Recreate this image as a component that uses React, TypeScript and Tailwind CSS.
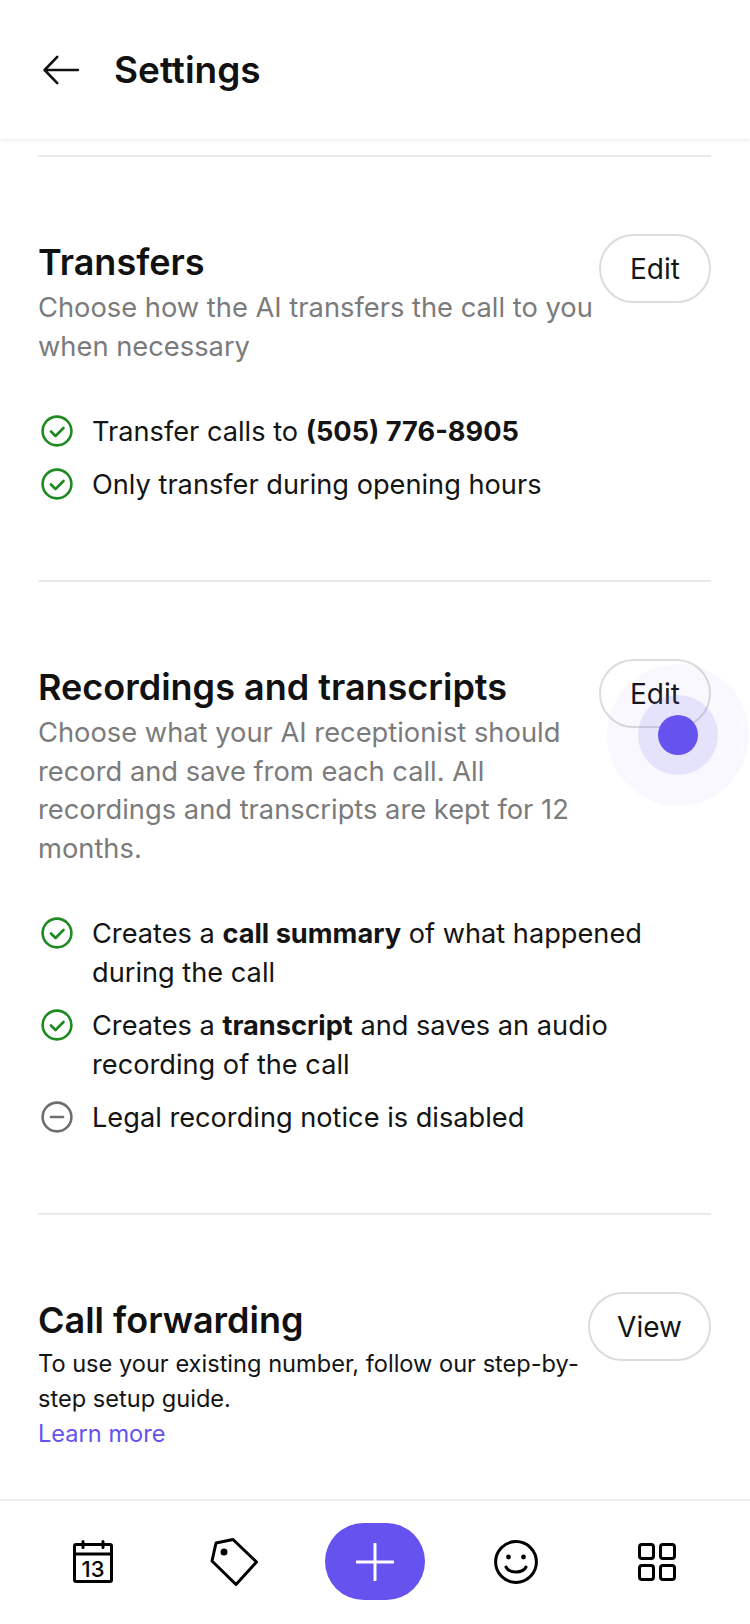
import React from "react";

function Check() {
  return (
    <svg viewBox="0 0 32 32" className="w-[32px] h-[32px] shrink-0 mt-[3px]" fill="none" stroke="#1d8a22" strokeWidth="2.6" strokeLinecap="round" strokeLinejoin="round">
      <circle cx="16" cy="16" r="14.4" />
      <path d="M10 16.5l4.5 4.5 8-8" />
    </svg>
  );
}

function Minus() {
  return (
    <svg viewBox="0 0 32 32" className="w-[32px] h-[32px] shrink-0 mt-[3px]" fill="none" stroke="#6e6e6e" strokeWidth="2.6" strokeLinecap="round">
      <circle cx="16" cy="16" r="14.4" />
      <path d="M10 16h12" />
    </svg>
  );
}

function Item({ icon, children }: { icon: React.ReactNode; children: React.ReactNode }) {
  return (
    <div className="flex gap-[19px] pl-[3px] text-[27.2px] leading-[39px] text-[#141414]">
      {icon}
      <div className="flex-1">{children}</div>
    </div>
  );
}

function Section({
  title,
  button,
  buttonWidth,
  children,
  items,
}: {
  title: string;
  button: string;
  buttonWidth: string;
  children: React.ReactNode;
  items?: React.ReactNode;
}) {
  return (
    <section className="pt-[77px] pb-[76px] border-b-2 border-[#e9e9e9] last:border-b-0">
      <div className="flex items-start">
        <div className="flex-1 min-w-0">
          <h2 className="mt-[8px] text-[36px] leading-[40px] font-semibold text-[#111]">{title}</h2>
          {children}
        </div>
        <button className={`${buttonWidth} h-[69px] shrink-0 rounded-full border-2 border-[#dcdcdc] bg-transparent text-[28px] text-[#141414]`}>
          {button}
        </button>
      </div>
      {items && <div className="mt-[46px] flex flex-col gap-[14px]">{items}</div>}
    </section>
  );
}

function Desc({ children }: { children: React.ReactNode }) {
  return <p className="mt-[7px] text-[27.3px] leading-[38.5px] text-[#7b7b7b]">{children}</p>;
}

export default function App() {
  return (
    <div className="relative w-[750px] h-[1624px] overflow-hidden bg-white flex flex-col font-['Inter',sans-serif]">
      <header className="relative z-10 h-[139px] shrink-0 flex items-center gap-[34px] pl-[42px] bg-white shadow-[0_1px_4px_rgba(0,0,0,0.10)]">
        <svg viewBox="0 0 40 32" className="w-[38px] h-[30px]" fill="none" stroke="#111" strokeWidth="2.8" strokeLinecap="round" strokeLinejoin="round">
          <path d="M38 16H3M16 2L2.5 16 16 30" />
        </svg>
        <h1 className="text-[37px] leading-[44px] font-semibold text-[#111]">Settings</h1>
      </header>

      <main className="flex-1 min-h-0 overflow-hidden pl-[38px] pr-[39px] pt-[16px]">
        <div className="border-t-2 border-[#e9e9e9]">
          <Section
            title="Transfers"
            button="Edit"
            buttonWidth="w-[112px]"
            items={
              <>
                <Item icon={<Check />}>
                  Transfer calls to <b className="font-bold">(505) 776-8905</b>
                </Item>
                <Item icon={<Check />}>Only transfer during opening hours</Item>
              </>
            }
          >
            <Desc>Choose how the AI transfers the call to you when necessary</Desc>
          </Section>
          <Section
            title="Recordings and transcripts"
            button="Edit"
            buttonWidth="w-[112px]"
            items={
              <>
                <Item icon={<Check />}>
                  Creates a <b className="font-bold">call summary</b> of what happened during the call
                </Item>
                <Item icon={<Check />}>
                  Creates a <b className="font-bold">transcript</b> and saves an audio recording of the call
                </Item>
                <Item icon={<Minus />}>Legal recording notice is disabled</Item>
              </>
            }
          >
            <Desc>Choose what your AI receptionist should record and save from each call. All recordings and transcripts are kept for 12 months.</Desc>
          </Section>
          <Section title="Call forwarding" button="View" buttonWidth="w-[123px]">
            <p className="mt-[6px] text-[23.6px] leading-[35px] text-[#141414]">
              To use your existing number, follow our step-by-step setup guide.
            </p>
            <p className="text-[23.6px] leading-[35px] text-[#6652ee]">Learn more</p>
          </Section>
        </div>
      </main>

      <nav className="relative z-10 h-[125px] shrink-0 bg-white border-t-2 border-[#eeeeee]">
        <div className="grid grid-cols-5 items-center justify-items-center px-[22px] pt-[22px]">
          <svg viewBox="0 0 40 44" className="w-[40px] h-[44px] text-black" fill="none" stroke="currentColor" strokeWidth="3" strokeLinejoin="round" strokeLinecap="round">
            <rect x="1.5" y="4.5" width="37" height="37" rx="1.5" />
            <path d="M1.5 14h37M10 1.5v6M30 1.5v6" />
            <text x="20" y="37" textAnchor="middle" fontSize="22" fontWeight="500" fill="currentColor" stroke="none" fontFamily="Inter, sans-serif">13</text>
          </svg>
          <svg viewBox="0 0 48 48" className="w-[48px] h-[48px]" fill="none" stroke="#000" strokeWidth="3" strokeLinejoin="round" strokeLinecap="round">
            <path d="M6 5L23 1.5 46.5 24 26 46.5 2 23z" />
            <circle cx="14" cy="14" r="2" fill="#000" />
          </svg>
          <div className="w-[100px] h-[77px] rounded-full bg-[#6652ee] flex items-center justify-center">
            <svg viewBox="0 0 38 38" className="w-[38px] h-[38px]" fill="none" stroke="#fff" strokeWidth="3" strokeLinecap="round">
              <path d="M19 1v36M1 19h36" />
            </svg>
          </div>
          <svg viewBox="0 0 44 44" className="w-[44px] h-[44px]" fill="none" stroke="#000" strokeWidth="3" strokeLinecap="round">
            <circle cx="22" cy="22" r="20.4" />
            <circle cx="14.5" cy="17" r="2.4" fill="#000" stroke="none" />
            <circle cx="29.5" cy="17" r="2.4" fill="#000" stroke="none" />
            <path d="M12 27c3 6.5 17 6.5 20 0" />
          </svg>
          <svg viewBox="0 0 38 38" className="w-[38px] h-[38px]" fill="none" stroke="#000" strokeWidth="3" strokeLinejoin="round">
            <rect x="1.5" y="1.5" width="14" height="14" rx="2.5" />
            <rect x="22.5" y="1.5" width="14" height="14" rx="2.5" />
            <rect x="1.5" y="22.5" width="14" height="14" rx="2.5" />
            <rect x="22.5" y="22.5" width="14" height="14" rx="2.5" />
          </svg>
        </div>
      </nav>

      <div className="absolute z-20 left-[607px] top-[664px] w-[142px] h-[142px] rounded-full bg-[#6652ee]/[0.04] flex items-center justify-center">
        <div className="w-[80px] h-[80px] rounded-full bg-[#6652ee]/[0.13] flex items-center justify-center">
          <div className="w-[40px] h-[40px] rounded-full bg-[#6652ee]" />
        </div>
      </div>
    </div>
  );
}
